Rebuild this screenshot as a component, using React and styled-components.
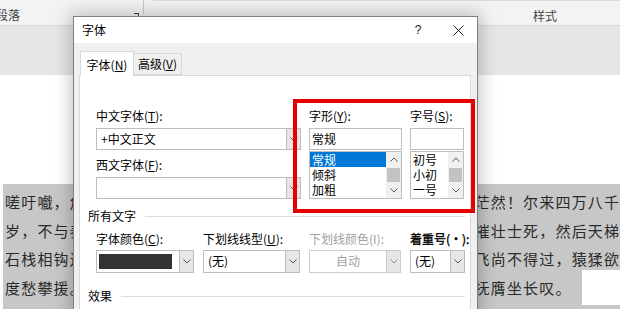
import React from "react";
import styled, { createGlobalStyle } from "styled-components";

const Global = createGlobalStyle`
  html, body { margin: 0; padding: 0; background: #fff; overflow: hidden; }
  body { font-family: "Noto Sans CJK SC", "Noto Sans", sans-serif; }
  #root { width: 620px; height: 309px; }
`;

const UI_FONT = `"Noto Sans CJK SC", "Noto Sans", sans-serif`;

const Screen = styled.div`
  position: relative;
  width: 620px;
  height: 309px;
  overflow: hidden;
  background: #fff;
  font-family: ${UI_FONT};
`;

/* ---------- Word background ---------- */
const RibbonLabels = styled.div`
  display: flex;
  height: 26px;
  box-sizing: border-box;
  background: #f3f3f3;
  border-bottom: 1px solid #d8d8d8;
  font-size: 12px;
  color: #444;
  overflow: hidden;
`;

const Group = styled.div`
  position: relative;
  flex: none;
  width: ${(p) => p.$w}px;
  display: flex;
  align-items: flex-start;
  padding-top: 7px;
  justify-content: ${(p) => (p.$center ? "center" : "flex-start")};
  border-top: ${(p) => (p.$topLine ? "1px solid #dcdcdc" : "none")};
  box-sizing: border-box;
`;

const GroupLabel = styled.span`
  margin-left: ${(p) => p.$ml || 0}px;
  line-height: 16px;
  white-space: nowrap;
`;

const Launcher = styled.span`
  margin-left: auto;
  margin-right: 4px;
  margin-top: 6px;
  width: 4px;
  height: 3px;
  border-top: 1px solid #444;
  border-right: 1px solid #444;
`;

const GroupSep = styled.div`
  flex: none;
  width: 1px;
  height: 14px;
  background: #c8c8c8;
  margin-right: 9px;
`;

const RibbonBand = styled.div`
  height: 49px;
  background: #e6e6e6;
`;

const Doc = styled.div`
  padding: 109px 0 0 3px;
  font-family: ${UI_FONT};
`;

const Line = styled.div`
  display: flex;
  height: ${(p) => (p.$paraEnd ? 35.5 : 28.5)}px;
`;

const Hl = styled.span`
  flex: ${(p) => (p.$fill ? "1" : "none")};
  display: block;
  height: 100%;
  box-sizing: border-box;
  padding: 8px ${(p) => (p.$fill ? 0 : 10)}px 0 2px;
  line-height: 20px;
  font-size: 15px;
  letter-spacing: 1.19px;
  white-space: nowrap;
  overflow: hidden;
  color: #2a2a2a;
  background: #c7c7c7;
`;

const Blank = styled.span`
  flex: 1;
  background: #fff;
`;

/* ---------- Dialog ---------- */
const Dialog = styled.div`
  position: absolute;
  left: 73px;
  top: 16px;
  width: 405px;
  height: 310px;
  box-sizing: border-box;
  background: #f0f0f0;
  border: 1px solid #7f7f7f;
  box-shadow: 0 0 16px 3px rgba(0, 0, 0, 0.22);
  display: flex;
  flex-direction: column;
  font-size: 12px;
  color: #000;
`;

const TitleBar = styled.div`
  flex: none;
  height: 26px;
  background: #fff;
  display: flex;
  align-items: center;
`;

const Title = styled.span`
  margin-left: 8px;
  line-height: 16px;
`;

const HelpBtn = styled.span`
  margin-left: auto;
  width: 42px;
  text-align: center;
  font-family: "Liberation Sans", sans-serif;
  font-size: 12px;
  color: #222;
`;

const CloseBtn = styled.span`
  width: 38px;
  height: 26px;
  display: flex;
  align-items: center;
  justify-content: center;
`;

const TabStrip = styled.div`
  flex: none;
  height: 32px;
  display: flex;
  align-items: flex-end;
  padding-left: 6px;
`;

const Tab = styled.div`
  position: relative;
  z-index: 1;
  box-sizing: border-box;
  width: ${(p) => (p.$active ? 54 : 48)}px;
  height: ${(p) => (p.$active ? 25 : 22)}px;
  margin-bottom: ${(p) => (p.$active ? -1 : 0)}px;
  background: ${(p) => (p.$active ? "#fff" : "#f0f0f0")};
  border: 1px solid #d9d9d9;
  border-bottom: ${(p) => (p.$active ? "none" : "1px solid #d9d9d9")};
  border-left: ${(p) => (p.$active ? "1px solid #d9d9d9" : "none")};
  display: flex;
  align-items: center;
  justify-content: center;
  padding-top: ${(p) => (p.$active ? 1 : 0)}px;
  line-height: 16px;
  white-space: nowrap;
`;

const Mn = styled.span`
  text-decoration: underline;
  text-underline-offset: 1px;
`;

const Panel = styled.div`
  flex: 1;
  margin: 0 6px 0 5px;
  background: #fff;
  border: 1px solid #d9d9d9;
  border-bottom: none;
  padding: 32px 5px 0 8px;
`;

const TopGrid = styled.div`
  display: grid;
  grid-template-columns: 205px 93px 54px;
  column-gap: 8px;
  margin-left: 8px;
  align-items: start;
`;

const Col = styled.div`
  display: flex;
  flex-direction: column;
`;

const Label = styled.div`
  height: 16px;
  line-height: 16px;
  margin-top: ${(p) => p.$mt || 0}px;
  margin-bottom: ${(p) => (p.$mb === undefined ? 4 : p.$mb)}px;
  white-space: nowrap;
  color: ${(p) => (p.$disabled ? "#a0a0a0" : "#000")};
  -webkit-text-stroke: ${(p) => (p.$strong ? "0.35px #000" : "0")};
`;

const Combo = styled.div`
  box-sizing: border-box;
  width: 100%;
  height: ${(p) => p.$h || 22}px;
  border: 1px solid ${(p) => (p.$disabled ? "#cccccc" : "#bdbdbd")};
  background: #fff;
  display: flex;
`;

const ComboValue = styled.div`
  flex: 1;
  padding-left: ${(p) => (p.$center ? 0 : 4)}px;
  text-align: ${(p) => (p.$center ? "center" : "left")};
  line-height: 20px;
  white-space: nowrap;
  overflow: hidden;
  color: ${(p) => (p.$disabled ? "#a0a0a0" : "#000")};
`;

const Swatch = styled.div`
  width: 77px;
  margin: 3px 3px 3px 2px;
  background: #333;
`;

const DropBtn = styled.div`
  flex: none;
  width: 13px;
  border-left: 1px solid ${(p) => (p.$disabled ? "#cccccc" : "#bdbdbd")};
  background: #e6e6e6;
  display: flex;
  align-items: center;
  justify-content: center;
`;

const TextBox = styled.div`
  box-sizing: border-box;
  height: 22px;
  border: 1px solid #bdbdbd;
  padding-left: 2px;
  line-height: 20px;
`;

const ListBox = styled.div`
  box-sizing: border-box;
  height: 48px;
  margin-top: 1px;
  border: 1px solid #bdbdbd;
  display: flex;
`;

const Items = styled.div`
  flex: 1;
  overflow: hidden;
`;

const Item = styled.div`
  height: 15px;
  line-height: 15px;
  padding-left: 2px;
  white-space: nowrap;
  background: ${(p) => (p.$sel ? "#0078d7" : "transparent")};
  color: ${(p) => (p.$sel ? "#fff" : "#000")};
`;

const ScrollBar = styled.div`
  flex: none;
  width: 15px;
  background: #f0f0f0;
  display: flex;
  flex-direction: column;
  align-items: center;
`;

const Arrow = styled.div`
  height: 15px;
  width: 15px;
  display: flex;
  align-items: center;
  justify-content: center;
`;

const Thumb = styled.div`
  width: 13px;
  height: 14px;
  margin: 1px 0;
  background: #c2c2c2;
`;

const GroupHeader = styled.div`
  display: flex;
  align-items: center;
  gap: 9px;
  height: 16px;
  line-height: 16px;
  margin-top: ${(p) => p.$mt}px;
  white-space: nowrap;
  &::after {
    content: "";
    flex: 1;
    height: 1px;
    background: #dcdcdc;
  }
`;

const FieldGrid = styled.div`
  display: grid;
  grid-template-columns: 98px 97px 92px 55px;
  column-gap: 9px;
  margin: 7px 0 0 8px;
`;

const RedBox = styled.div`
  position: absolute;
  left: 293px;
  top: 99px;
  width: 182px;
  height: 114px;
  box-sizing: border-box;
  border: 4px solid #e80000;
  z-index: 5;
`;

const Chevron = ({ up, color = "#555" }) => (
  <svg width="8" height="5" viewBox="0 0 8 5">
    <polyline
      points={up ? "0.5,4.5 4,1 7.5,4.5" : "0.5,0.5 4,4 7.5,0.5"}
      fill="none"
      stroke={color}
      strokeWidth="1"
    />
  </svg>
);

const ComboBox = ({ children, disabled, center, h, swatch }) => (
  <Combo $disabled={disabled} $h={h}>
    {swatch ? (
      <Swatch />
    ) : (
      <ComboValue $disabled={disabled} $center={center}>
        {children}
      </ComboValue>
    )}
    {swatch && <ComboValue />}
    <DropBtn $disabled={disabled}>
      <Chevron color={disabled ? "#8a8a8a" : "#555"} />
    </DropBtn>
  </Combo>
);

const List = ({ items, selected }) => (
  <ListBox>
    <Items>
      {items.map((t) => (
        <Item key={t} $sel={t === selected}>
          {t}
        </Item>
      ))}
    </Items>
    <ScrollBar>
      <Arrow>
        <Chevron up />
      </Arrow>
      <Thumb />
      <Arrow>
        <Chevron />
      </Arrow>
    </ScrollBar>
  </ListBox>
);

const lines = [
  { t: "嗟吁嚱，危乎高哉！蜀道之难，难于上青天！蚕丛及鱼凫，开国何茫然！尔来四万八千", full: true },
  { t: "岁，不与秦塞通人烟。西当太白有鸟道，可以横绝峨眉巅。地崩山摧壮士死，然后天梯", full: true },
  { t: "石栈相钩连。上有六龙回日之高标，下有冲波逆折之回川。黄鹤之飞尚不得过，猿猱欲", full: true },
  { t: "度愁攀援。青泥何盘盘，百步九折萦岩峦。扪参历井仰胁息，以手抚膺坐长叹。", full: false, end: true },
  { t: "\u00a0", full: true },
];

export default function App() {
  return (
    <Screen>
      <Global />
      <RibbonLabels>
        <Group $w={143}>
          <GroupLabel $ml={-4}>段落</GroupLabel>
          <Launcher />
        </Group>
        <GroupSep />
        <Group $w={784} $center $topLine>
          <GroupLabel>样式</GroupLabel>
        </Group>
      </RibbonLabels>
      <RibbonBand />
      <Doc>
        {lines.map((l, i) => (
          <Line key={i} $paraEnd={l.end}>
            <Hl $fill={l.full}>{l.t}</Hl>
            {!l.full && <Blank />}
          </Line>
        ))}
      </Doc>

      <Dialog>
        <TitleBar>
          <Title>字体</Title>
          <HelpBtn>?</HelpBtn>
          <CloseBtn>
            <svg width="11" height="11" viewBox="0 0 11 11">
              <path d="M0.5 0.5 L10.5 10.5 M10.5 0.5 L0.5 10.5" stroke="#222" strokeWidth="1" />
            </svg>
          </CloseBtn>
        </TitleBar>
        <TabStrip>
          <Tab $active>
            字体(<Mn>N</Mn>)
          </Tab>
          <Tab>
            高级(<Mn>V</Mn>)
          </Tab>
        </TabStrip>
        <Panel>
          <TopGrid>
            <Col>
              <Label>
                中文字体(<Mn>T</Mn>):
              </Label>
              <ComboBox>+中文正文</ComboBox>
              <Label $mt={7}>
                西文字体(<Mn>F</Mn>):
              </Label>
              <ComboBox />
            </Col>
            <Col>
              <Label>
                字形(<Mn>Y</Mn>):
              </Label>
              <TextBox>常规</TextBox>
              <List items={["常规", "倾斜", "加粗"]} selected="常规" />
            </Col>
            <Col>
              <Label>
                字号(<Mn>S</Mn>):
              </Label>
              <TextBox />
              <List items={["初号", "小初", "一号"]} />
            </Col>
          </TopGrid>

          <GroupHeader $mt={9}>所有文字</GroupHeader>
          <FieldGrid>
            <Col>
              <Label $mb={3}>
                字体颜色(<Mn>C</Mn>):
              </Label>
              <ComboBox h={23} swatch />
            </Col>
            <Col>
              <Label $mb={3}>
                下划线线型(<Mn>U</Mn>):
              </Label>
              <ComboBox h={23}>(无)</ComboBox>
            </Col>
            <Col>
              <Label $mb={3} $disabled>
                下划线颜色(I):
              </Label>
              <ComboBox h={23} disabled center>
                自动
              </ComboBox>
            </Col>
            <Col>
              <Label $mb={3} $strong>
                着重号(·):
              </Label>
              <ComboBox h={23}>(无)</ComboBox>
            </Col>
          </FieldGrid>
          <GroupHeader $mt={15}>效果</GroupHeader>
        </Panel>
      </Dialog>
      <RedBox />
    </Screen>
  );
}
